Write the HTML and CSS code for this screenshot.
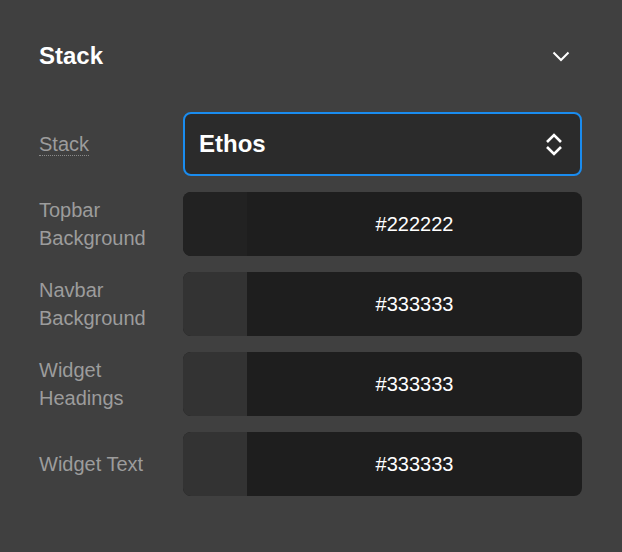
FILE: index.html
```html
<!DOCTYPE html>
<html>
<head>
<meta charset="utf-8">
<link rel="stylesheet" href="styles.css">
</head>
<body>
<div class="panel">
  <div class="header">
    <div class="title">Stack</div>
    <svg class="chev" width="18" height="11" viewBox="0 0 18 11"><path d="M1.5 1.5 L9 9 L16.5 1.5" fill="none" stroke="#fff" stroke-width="2"/></svg>
  </div>
  <div class="grid">
    <div class="label"><span class="dotted">Stack</span></div>
    <div class="select">
      <span class="select-text">Ethos</span>
      <svg class="updown" width="18" height="23" viewBox="0 0 18 23"><path d="M2 9 L9 2 L16 9 M2 14 L9 21 L16 14" fill="none" stroke="#fff" stroke-width="2.6"/></svg>
    </div>

    <div class="label">Topbar<br>Background</div>
    <div class="color"><div class="swatch" style="background:#222222"></div><div class="hex">#222222</div></div>

    <div class="label">Navbar<br>Background</div>
    <div class="color"><div class="swatch" style="background:#333333"></div><div class="hex">#333333</div></div>

    <div class="label">Widget<br>Headings</div>
    <div class="color"><div class="swatch" style="background:#333333"></div><div class="hex">#333333</div></div>

    <div class="label">Widget Text</div>
    <div class="color"><div class="swatch" style="background:#333333"></div><div class="hex">#333333</div></div>
  </div>
</div>
</body>
</html>
```
FILE: styles.css
```css
html, body {
  margin: 0;
  background: #404040;
  font-family: "Liberation Sans", Arial, sans-serif;
}
.panel {
  padding: 40px 40px 0 39px;
}
.header {
  display: flex;
  justify-content: space-between;
  align-items: center;
  height: 32px;
  margin-bottom: 40px;
}
.title {
  color: #fff;
  font-weight: bold;
  font-size: 24px;
}
.chev {
  margin-right: 12px;
  display: block;
}
.grid {
  display: grid;
  grid-template-columns: 144px 1fr;
  grid-auto-rows: 64px;
  row-gap: 16px;
  align-items: center;
}
.label {
  color: #9c9c9c;
  font-size: 20px;
  line-height: 28px;
}
.dotted {
  display: inline-block;
  line-height: 22px;
  border-bottom: 1px dotted #8a8a8a;
}
.select {
  height: 64px;
  box-sizing: border-box;
  border: 2px solid #1a8cef;
  border-radius: 8px;
  background: #2b2b2b;
  display: flex;
  align-items: center;
  justify-content: space-between;
  padding: 0 17px 0 14px;
}
.select-text {
  color: #fff;
  font-weight: bold;
  font-size: 24px;
}
.updown {
  display: block;
}
.color {
  height: 64px;
  border-radius: 8px;
  overflow: hidden;
  background: #1e1e1e;
  display: flex;
}
.swatch {
  width: 64px;
  flex: none;
}
.hex {
  flex: 1;
  display: flex;
  align-items: center;
  justify-content: center;
  color: #fff;
  font-size: 20px;
}
```
